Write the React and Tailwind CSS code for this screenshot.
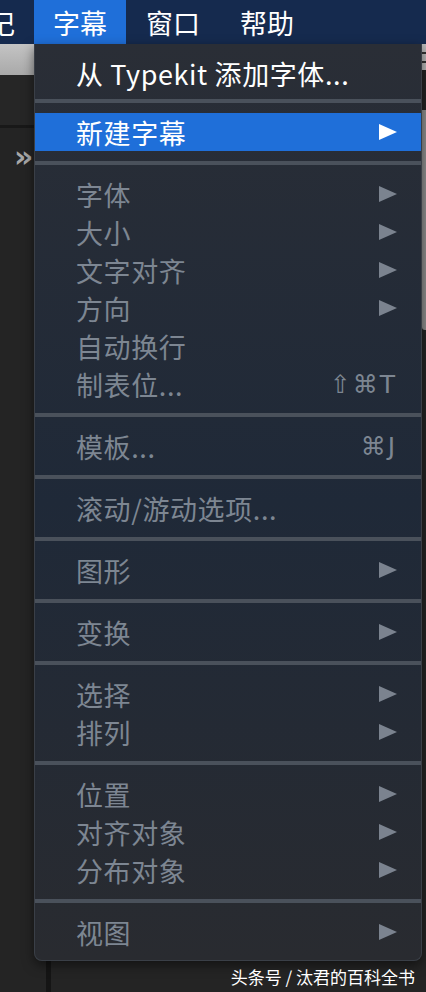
import React from "react";

const font = { fontFamily: '"Noto Sans CJK SC", "Noto Sans", sans-serif' };

const Arrow = ({ active }) => (
  <svg width="18" height="16" viewBox="0 0 18 16" className="shrink-0">
    <polygon points="0,0 18,8 0,16" fill={active ? "#ffffff" : "#7b838f"} />
  </svg>
);

const Sep = ({ first }) => (
  <div className={first ? "pt-[7px] pb-[10px]" : "pt-[10px] pb-[10px]"}>
    <div className="h-[4px] bg-[#4a515b]" />
  </div>
);

const Item = ({ label, arrow, shortcut, active, enabled }) => (
  <div
    className={
      "flex items-center h-[38px] pl-[41px] pr-[24px] text-[27px] tracking-[0.6px] leading-none " +
      (active ? "bg-[#1f6fd9] text-white" : enabled ? "text-white" : "text-[#7d8692]")
    }
  >
    <span className="flex-1 whitespace-nowrap">{label}</span>
    {arrow && <Arrow active={active} />}
    {shortcut && (
      <span className="text-[25px] tracking-[2px] text-[#7d8692]" style={{ fontFamily: '"DejaVu Sans", "Noto Sans CJK SC", sans-serif' }}>
        {shortcut}
      </span>
    )}
  </div>
);

const groups = [
  [{ label: "从 Typekit 添加字体...", enabled: true }],
  [{ label: "新建字幕", arrow: true, active: true }],
  [
    { label: "字体", arrow: true },
    { label: "大小", arrow: true },
    { label: "文字对齐", arrow: true },
    { label: "方向", arrow: true },
    { label: "自动换行" },
    { label: "制表位...", shortcut: "⇧⌘T" },
  ],
  [{ label: "模板...", shortcut: "⌘J" }],
  [{ label: "滚动/游动选项..." }],
  [{ label: "图形", arrow: true }],
  [{ label: "变换", arrow: true }],
  [
    { label: "选择", arrow: true },
    { label: "排列", arrow: true },
  ],
  [
    { label: "位置", arrow: true },
    { label: "对齐对象", arrow: true },
    { label: "分布对象", arrow: true },
  ],
  [{ label: "视图", arrow: true }],
];

export default function App() {
  return (
    <div className="relative w-[426px] h-[992px] overflow-hidden bg-[#242424]" style={font}>
      {/* menu bar */}
      <div className="flex h-[44px] bg-[#152a4e] text-white text-[27px] leading-none">
        <div className="flex items-center ml-[-31px] px-[19px]">记</div>
        <div className="flex items-center px-[19px] bg-[#1f6fd9]">字幕</div>
        <div className="flex items-center px-[20px]">窗口</div>
        <div className="flex items-center px-[20px]">帮助</div>
      </div>

      {/* app behind the menu */}
      <div className="flex h-[948px]">
        <div className="w-[46px] flex flex-col">
          <div className="h-[31px] bg-gradient-to-b from-[#c4c4c4] to-[#a9a9a9]" />
          <div className="h-[53px] bg-[#262626] border-b-[3px] border-[#181818]" />
          <div className="flex pl-[14px] pt-[14px] text-[#a8a8a8] text-[30px] font-bold leading-none" style={{ fontFamily: '"DejaVu Sans", sans-serif' }}>
            »
          </div>
        </div>
        <div className="w-[5px] bg-[#151515]" />
        <div className="flex-1" />
        <div className="w-[4px] flex flex-col">
          <div className="h-[26px] bg-[#b8b8b8] flex flex-col justify-center gap-[7px]">
            <div className="h-[2px] bg-[#333]" />
            <div className="h-[2px] bg-[#333]" />
          </div>
          <div className="h-[40px]" />
          <div className="h-[220px] bg-[#8e8e8e] rounded-bl-[3px]" />
        </div>
      </div>

      {/* dropdown */}
      <div className="absolute left-[34px] top-[44px] w-[388px] pt-[10px] pb-[9px] rounded-b-[8px] border-x border-b border-[#3a3f47] bg-gradient-to-b from-[#2a2e36] via-[#1f2938] to-[#292b30] shadow-[0_4px_12px_rgba(0,0,0,0.5)]">
        {groups.map((g, i) => (
          <div key={i}>
            {i > 0 && <Sep first={i === 1} />}
            {g.map((it) => (
              <Item key={it.label} {...it} />
            ))}
          </div>
        ))}
      </div>

      {/* watermark */}
      <div className="absolute right-[11px] top-[966px] text-white text-[17px] leading-[22px] whitespace-nowrap">
        头条号 / 汰君的百科全书
      </div>
    </div>
  );
}
